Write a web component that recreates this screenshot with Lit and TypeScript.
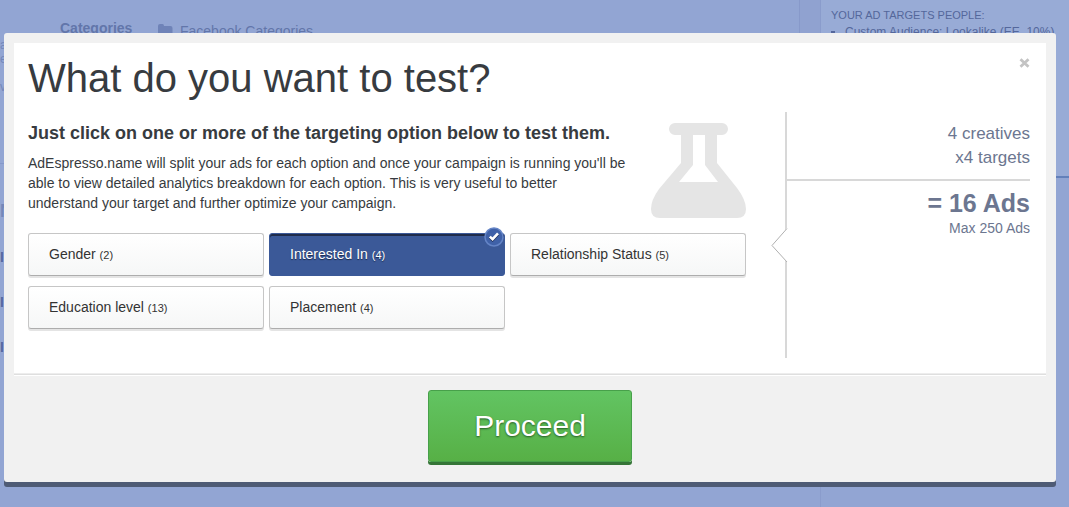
import { LitElement, html, css } from "lit";
import { customElement, property, state } from "lit/decorators.js";
import { classMap } from "lit/directives/class-map.js";

interface TestOption {
  label: string;
  count: number;
  selected: boolean;
}

@customElement("page-backdrop")
class PageBackdrop extends LitElement {
  static styles = css`
    :host {
      display: grid;
      grid-template-columns: minmax(0, 1fr) 21px 249px;
      min-height: 100vh;
      background: #92a5d3;
      color: #6276aa;
      overflow: hidden;
    }
    .main {
      display: flex;
      align-items: flex-start;
    }
    .edge {
      width: 60px;
      display: flex;
      flex-direction: column;
      padding-top: 38px;
      font-size: 12px;
      line-height: 14px;
      color: #7387ba;
    }
    .gap {
      margin-top: 14px;
    }
    .rule {
      margin-top: 69px;
      border-top: 1px solid #8598ca;
    }
    .title {
      margin-top: 36px;
      font-size: 18px;
      line-height: 22px;
      font-weight: bold;
    }
    .item {
      margin-top: 25px;
      line-height: 20px;
      font-size: 14px;
      font-weight: bold;
      color: #5468a0;
    }
    .row {
      display: flex;
      padding-top: 19px;
      font-size: 14px;
      line-height: 20px;
    }
    .name {
      width: 98px;
      font-weight: bold;
      line-height: 18px;
    }
    .row svg {
      margin: 5px 7px 0 0;
    }
    .value {
      padding-top: 2px;
    }
    .gutter {
      box-sizing: border-box;
      height: 178px;
      background: #90a2d0;
      border-left: 1px solid #8799ca;
    }
    .aside {
      display: flex;
      flex-direction: column;
      border-left: 1px solid #8a9ccc;
    }
    .targets {
      height: 178px;
      box-sizing: border-box;
      padding: 8px 0 0 10px;
      background: #98abd6;
      border-bottom: 2px solid #6380ba;
      font-size: 11px;
      line-height: 14px;
      color: #54679b;
      white-space: nowrap;
    }
    .targets ul {
      margin: 2px 0 0;
      padding: 0 0 0 14px;
      font-size: 12px;
      line-height: 16px;
      list-style: square;
    }
  `;

  render() {
    return html`
      <div class="main">
        <div class="edge">
          <span>a</span><span>e</span><span class="gap">va</span>
          <span class="rule"></span><span class="title">N</span>
          <span class="item">I</span><span class="item">I</span><span class="item">I</span>
        </div>
        <div class="row">
          <span class="name">Categories</span>
          <svg width="15" height="13" viewBox="0 0 15 13" aria-hidden="true">
            <path fill="#6f83b8" d="M0 2q0-2 2-2h2.500q1.500 0 1.500 2h6.500q2 0 2 2v7q0 2-2 2H2q-2 0-2-2z" />
          </svg>
          <span class="value">Facebook Categories</span>
        </div>
      </div>
      <div class="gutter"></div>
      <div class="aside">
        <div class="targets">
          YOUR AD TARGETS PEOPLE:
          <ul><li>Custom Audience: Lookalike (EE, 10%)</li></ul>
        </div>
      </div>
    `;
  }
}

@customElement("option-button")
class OptionButton extends LitElement {
  @property() label = "";
  @property({ type: Number }) count = 0;
  @property({ type: Boolean }) selected = false;

  static styles = css`
    :host {
      display: block;
      position: relative;
    }
    .option {
      display: block;
      box-sizing: border-box;
      width: 100%;
      height: 43px;
      padding: 0 20px;
      border: 1px solid #c6c6c6;
      border-bottom-color: #adadad;
      border-radius: 3px;
      background: linear-gradient(#ffffff, #f6f7f7);
      box-shadow: 0 2px 0 #e4e4e4;
      color: #333333;
      font: 14px/20px "Liberation Sans", Arial, sans-serif;
      text-align: left;
      cursor: pointer;
    }
    .count {
      font-size: 11px;
    }
    .selected {
      border-color: #3b5998;
      background: #3b5998;
      box-shadow: inset 0 2px 0 #1f2c4b;
      color: #ffffff;
      text-shadow: 0 1px 1px #1c2a4a;
    }
    .check {
      position: absolute;
      top: -6px;
      right: 1px;
      pointer-events: none;
    }
  `;

  render() {
    return html`
      <button
        type="button"
        class=${classMap({ option: true, selected: this.selected })}
        aria-pressed=${this.selected ? "true" : "false"}
      >
        ${this.label} <span class="count">(${this.count})</span>
      </button>
      ${this.selected
        ? html`<svg class="check" width="20" height="20" viewBox="0 0 20 20" aria-hidden="true">
            <circle cx="10" cy="10" r="9" fill="#3f61a8" stroke="#6484c6" stroke-width="1.500" />
            <path d="M5.800 10.600l2.800 2.600 5.400-5.800" fill="none" stroke="#1f2f57" stroke-width="2.600" />
            <path d="M5.800 9.600l2.800 2.600 5.400-5.800" fill="none" stroke="#ffffff" stroke-width="2.600" />
          </svg>`
        : ""}
    `;
  }
}

@customElement("app-root")
class AppRoot extends LitElement {
  @state() private options: TestOption[] = [
    { label: "Gender", count: 2, selected: false },
    { label: "Interested In", count: 4, selected: true },
    { label: "Relationship Status", count: 5, selected: false },
    { label: "Education level", count: 13, selected: false },
    { label: "Placement", count: 4, selected: false },
  ];

  static styles = css`
    :host {
      display: block;
      position: relative;
      min-height: 100vh;
      overflow: hidden;
      font-family: "Liberation Sans", Arial, sans-serif;
      color: #373b40;
    }
    .modal {
      position: absolute;
      top: 33px;
      left: 4px;
      right: 13px;
      padding: 10px 10px 0;
      border-radius: 3px;
      background: #f1f1f1;
      box-shadow: 0 5px 0 #4e5b75;
    }
    .panel {
      position: relative;
      padding: 15px 16px 15px 14px;
      background: #ffffff;
    }
    h1 {
      margin: 0 0 14px;
      font-size: 40px;
      line-height: 40px;
      font-weight: normal;
    }
    .close {
      position: absolute;
      top: 15px;
      right: 16px;
      display: block;
      padding: 0;
      border: 0;
      background: none;
      line-height: 0;
      cursor: pointer;
    }
    .body {
      display: grid;
      grid-template-columns: minmax(0, 1fr) 245px;
      column-gap: 39px;
      min-height: 246px;
    }
    .intro {
      display: flex;
      justify-content: space-between;
      padding-top: 11px;
      margin-bottom: 15px;
    }
    .copy {
      width: 600px;
    }
    .flask {
      flex: none;
    }
    h2 {
      margin: 0 0 10px;
      font-size: 18px;
      line-height: 20px;
    }
    p {
      margin: 0;
      font-size: 14px;
      line-height: 20px;
    }
    .options {
      display: grid;
      grid-template-columns: repeat(3, minmax(0, 1fr));
      gap: 10px 5px;
    }
    .summary {
      position: relative;
      border-left: 2px solid #d8d8d8;
      padding-top: 10px;
      text-align: right;
      color: #6c7690;
    }
    .factors {
      padding-bottom: 9px;
      border-bottom: 2px solid #d8d8d8;
      margin-bottom: 7px;
      font-size: 17px;
      line-height: 24px;
    }
    .total {
      font-size: 25px;
      line-height: 30px;
      font-weight: bold;
    }
    .limit {
      font-size: 14px;
      line-height: 20px;
    }
    .arrow {
      position: absolute;
      top: 116px;
      left: -16px;
    }
    .footer {
      display: flex;
      justify-content: center;
      margin: 0 -10px;
      padding: 14px 0 20px;
    }
    .divider {
      height: 1px;
      border-top: 1px solid #ededed;
      border-bottom: 1px solid #ffffff;
      background: #dfdfdf;
    }
    .proceed {
      padding: 18px 45px;
      border: 1px solid #47a04a;
      border-radius: 3px;
      background: linear-gradient(#62c462, #57b046);
      box-shadow: 0 3px 0 #357537;
      color: #ffffff;
      font: 30px/34px "Liberation Sans", Arial, sans-serif;
      text-shadow: 0 1px 2px #245a24;
      cursor: pointer;
    }
  `;

  private toggle(index: number) {
    this.options = this.options.map((option, i) =>
      i === index ? { ...option, selected: !option.selected } : option
    );
  }

  render() {
    return html`
      <page-backdrop></page-backdrop>
      <div class="modal" role="dialog" aria-labelledby="title">
        <div class="panel">
          <h1 id="title">What do you want to test?</h1>
          <button class="close" type="button" aria-label="Close">
            <svg width="11" height="10" viewBox="0 0 11 10" aria-hidden="true">
              <path d="M1.500 1.200l8 7.600M9.500 1.200l-8 7.600" stroke="#c3c3c3" stroke-width="2.800" />
            </svg>
          </button>
          <div class="body">
            <div>
              <div class="intro">
                <div class="copy">
                  <h2>Just click on one or more of the targeting option below to test them.</h2>
                  <p>
                    AdEspresso.name will split your ads for each option and once your campaign is
                    running you'll be able to view detailed analytics breakdown for each option.
                    This is very useful to better understand your target and further optimize your
                    campaign.
                  </p>
                </div>
                <svg class="flask" width="95" height="95" viewBox="0 0 95 95" aria-hidden="true">
                  <path
                    fill="#e5e5e5"
                    fill-rule="evenodd"
                    d="M24 0H71a6 6 0 0 1 0 12H66V40L86 65Q95 77 95 86Q95 95 86 95H9Q0 95 0 86Q0 77 8 66L30 40V12H24a6 6 0 0 1 0-12zM42 12V42L28 59H67L54 42V12z"
                  />
                </svg>
              </div>
              <div class="options">
                ${this.options.map(
                  (option, i) => html`<option-button
                    .label=${option.label}
                    .count=${option.count}
                    .selected=${option.selected}
                    @click=${() => this.toggle(i)}
                  ></option-button>`
                )}
              </div>
            </div>
            <div class="summary">
              <svg class="arrow" width="17" height="35" viewBox="0 0 17 35" aria-hidden="true">
                <path fill="#ffffff" d="M17 0L15.500 .500L1 17.500L15.500 34L17 34z" />
                <path fill="none" stroke="#b0b0b0" d="M16 .500L1 17.500L16 34" />
              </svg>
              <div class="factors">4 creatives<br />x4 targets</div>
              <div class="total">= 16 Ads</div>
              <div class="limit">Max 250 Ads</div>
            </div>
          </div>
        </div>
        <div class="divider"></div>
        <div class="footer">
          <button class="proceed" type="button">Proceed</button>
        </div>
      </div>
    `;
  }
}
